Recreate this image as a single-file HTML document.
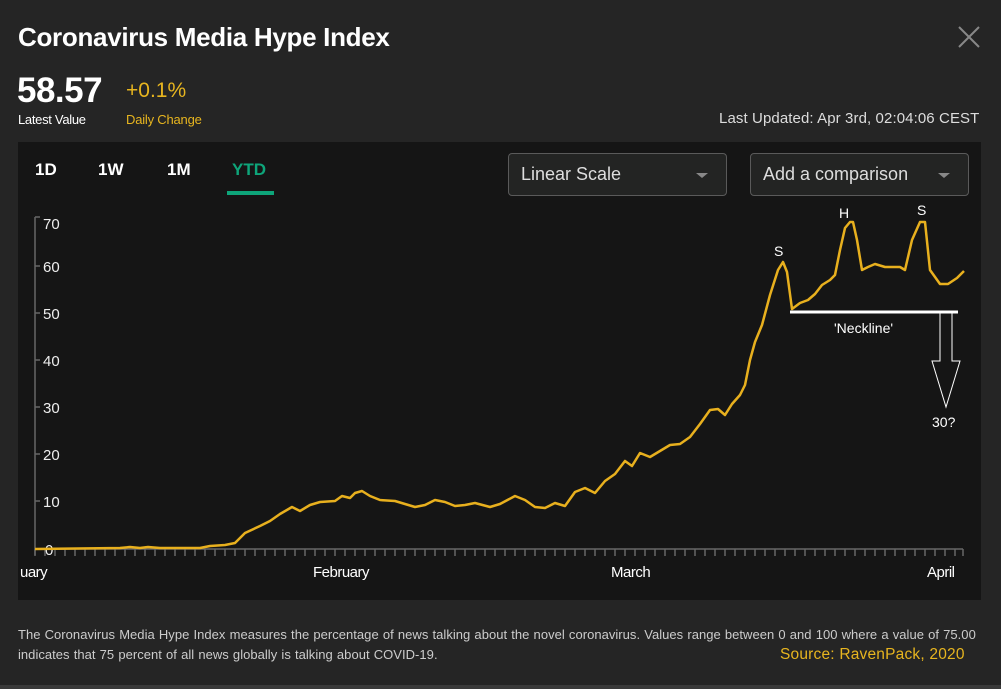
<!DOCTYPE html>
<html><head><meta charset="utf-8"><style>
body{margin:0;width:1001px;height:689px;background:#252525;font-family:"Liberation Sans",sans-serif;overflow:hidden;position:relative;color:#fff}
.a{position:absolute;white-space:nowrap}
.dd{position:absolute;top:153px;height:43px;border:1px solid #5a5a5a;border-radius:4px;background:#232423;box-sizing:border-box;color:#ddd;font-size:18px;line-height:41px;padding-left:12px}
.dd:after{content:"";position:absolute;right:18px;top:19px;border-left:6px solid transparent;border-right:6px solid transparent;border-top:5px solid #888}
</style></head><body>
<div class="a" style="left:18px;top:22px;font-size:26px;font-weight:bold;letter-spacing:-0.3px">Coronavirus Media Hype Index</div>
<svg class="a" style="left:957px;top:25px" width="24" height="24"><path d="M2 2L22 22M22 2L2 22" stroke="#888" stroke-width="2"/></svg>
<div class="a" style="left:17px;top:71px;font-size:35px;font-weight:bold;letter-spacing:-0.5px">58.57</div>
<div class="a" style="left:18px;top:112px;font-size:13px;letter-spacing:-0.3px">Latest Value</div>
<div class="a" style="left:126px;top:79px;font-size:21px;color:#e7b51f">+0.1%</div>
<div class="a" style="left:126px;top:112px;font-size:13px;color:#e7b51f;letter-spacing:-0.2px">Daily Change</div>
<div class="a" style="left:719px;top:110px;font-size:15px;color:#ddd;letter-spacing:0.1px">Last Updated: Apr 3rd, 02:04:06 CEST</div>
<div class="a" style="left:18px;top:142px;width:963px;height:458px;background:#151515"></div>
<div class="a" style="left:35px;top:160px;font-size:17px;font-weight:bold">1D</div>
<div class="a" style="left:98px;top:160px;font-size:17px;font-weight:bold">1W</div>
<div class="a" style="left:167px;top:160px;font-size:17px;font-weight:bold">1M</div>
<div class="a" style="left:232px;top:160px;font-size:17px;font-weight:bold;color:#0ea57a">YTD</div>
<div class="a" style="left:227px;top:191px;width:47px;height:4px;background:#0ea57a"></div>
<div class="dd" style="left:508px;width:219px">Linear Scale</div>
<div class="dd" style="left:750px;width:219px">Add a comparison</div>
<svg class="a" style="left:0;top:0" width="1001" height="689" font-family="Liberation Sans,sans-serif">
<g stroke="#666" stroke-width="1.5" fill="none">
<path d="M35 217H40M35 217V555M35 266H40M35 313H40M35 360H40M35 407H40M35 454H40M35 501H40M35 549H963"/>
<path d="M35 549V556M45 549V556M55 549V556M65 549V556M75 549V556M85 549V556M95 549V556M105 549V556M115 549V556M125 549V556M135 549V556M145 549V556M155 549V556M165 549V556M175 549V556M185 549V556M195 549V556M205 549V556M215 549V556M225 549V556M235 549V556M245 549V556M255 549V556M265 549V556M275 549V556M285 549V556M295 549V556M305 549V556M315 549V556M325 549V556M335 549V556M345 549V556M355 549V556M365 549V556M375 549V556M385 549V556M395 549V556M405 549V556M415 549V556M425 549V556M435 549V556M445 549V556M455 549V556M465 549V556M475 549V556M485 549V556M495 549V556M505 549V556M515 549V556M525 549V556M535 549V556M545 549V556M555 549V556M565 549V556M575 549V556M585 549V556M595 549V556M605 549V556M615 549V556M625 549V556M635 549V556M645 549V556M655 549V556M665 549V556M675 549V556M685 549V556M695 549V556M705 549V556M715 549V556M725 549V556M735 549V556M745 549V556M755 549V556M765 549V556M775 549V556M785 549V556M795 549V556M805 549V556M815 549V556M825 549V556M835 549V556M845 549V556M855 549V556M865 549V556M875 549V556M885 549V556M895 549V556M905 549V556M915 549V556M925 549V556M935 549V556M945 549V556M955 549V556M963 549V556"/>
</g>
<g fill="#eee" font-size="15">
<text x="43" y="229">70</text><text x="43" y="272">60</text><text x="43" y="319">50</text><text x="43" y="366">40</text><text x="43" y="413">30</text><text x="43" y="460">20</text><text x="43" y="507">10</text><text x="45" y="555">0</text>
</g>
<g fill="#fff" font-size="15" letter-spacing="-0.5">
<text x="20" y="577">uary</text><text x="313" y="577">February</text><text x="611" y="577">March</text><text x="927" y="577">April</text>
</g>
<polyline fill="none" stroke="#e8b01e" stroke-width="2.5" stroke-linejoin="round" points="35,549 120,548 130,547 140,548 148,547 160,548 200,548 210,546 225,545 235,543 245,533 260,526 270,521 280,514 292,507 300,511 310,505 320,502 335,501 342,496 350,498 355,493 362,491 370,496 380,500 395,501 405,504 415,507 425,505 435,500 445,502 455,506 465,505 475,503 490,507 500,504 515,496 525,500 535,507 545,508 555,503 565,506 575,492 585,488 595,493 605,481 615,474 625,461 632,466 640,453 650,457 660,451 670,445 680,444 690,437 700,424 710,410 718,409 725,415 732,404 740,395 745,385 750,360 755,342 762,325 770,295 778,270 783,262 787,272 792,309 800,303 808,300 815,294 822,285 830,280 835,275 840,250 845,228 850,222 853,222 857,240 862,270 868,267 875,264 885,267 900,267 905,270 912,240 920,222 925,222 930,270 940,284 948,284 957,278 964,271"/>
<path d="M790 312H958" stroke="#fff" stroke-width="3"/>
<path d="M940 313V361H932L946 407L960 361H952V313Z" fill="none" stroke="#fff" stroke-width="1"/>
<g fill="#fff" font-size="14">
<text x="774" y="256">S</text><text x="839" y="218">H</text><text x="917" y="215">S</text>
<text x="834" y="333">'Neckline'</text><text x="932" y="427">30?</text>
</g>
</svg>
<div class="a" style="left:18px;top:625px;font-size:13px;color:#ccc;letter-spacing:0.03px;word-spacing:0.5px;line-height:20px">The Coronavirus Media Hype Index measures the percentage of news talking about the novel coronavirus. Values range between 0 and 100 where a value of 75.00<br>indicates that 75 percent of all news globally is talking about COVID-19.</div>
<div class="a" style="left:780px;top:646px;font-size:15.5px;color:#e7b51f;letter-spacing:0.2px">Source: RavenPack, 2020</div>
<div class="a" style="left:0;top:685px;width:1001px;height:4px;background:#3a3a3a"></div>
</body></html>
